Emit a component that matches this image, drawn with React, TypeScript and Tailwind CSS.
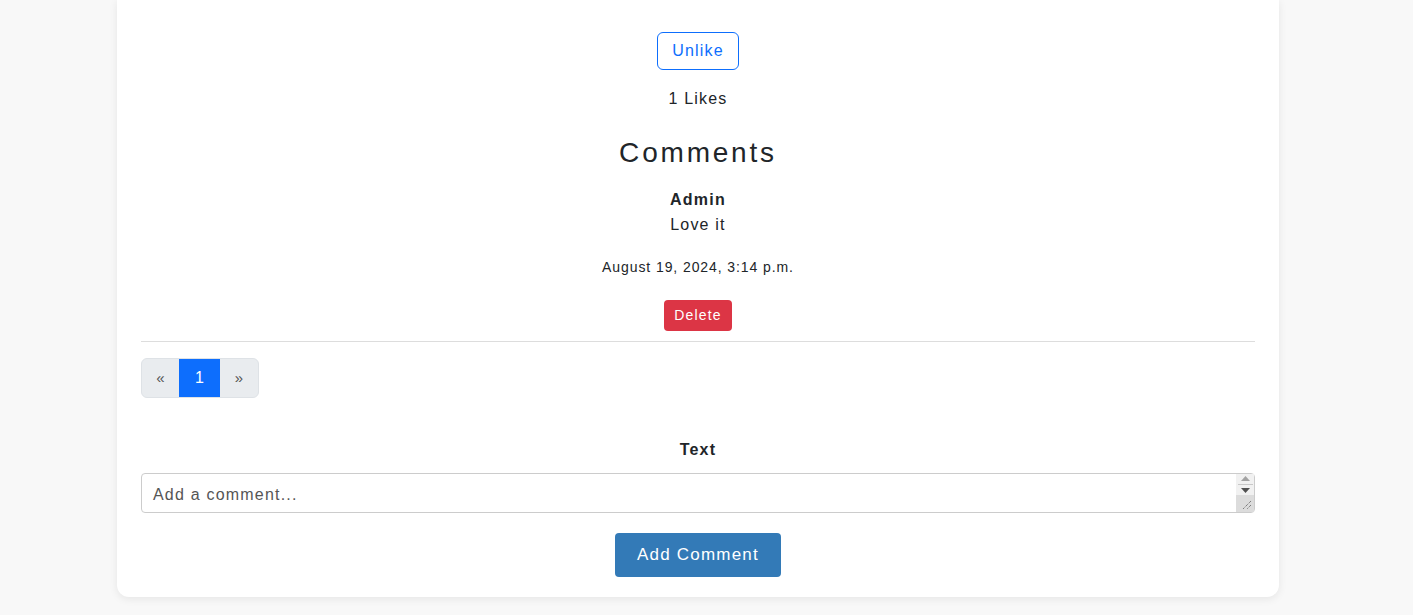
export default function App() {
  return (
    <div
      className="min-h-[615px] bg-[#f8f8f8] pl-[117px] pr-[134px] text-[#212529] tracking-[0.075em]"
      style={{ fontFamily: '"Liberation Sans", Arial, sans-serif' }}
    >
      <div className="bg-white rounded-b-xl shadow-[0_2px_8px_rgba(0,0,0,0.08)] px-6 pt-8 pb-5">
        {/* Likes */}
        <div className="flex flex-col items-center">
          <button className="w-[82px] h-[38px] border border-[#0d6efd] rounded-md text-[#0d6efd] text-base">
            Unlike
          </button>
          <p className="mt-[17px] leading-6 text-base">1 Likes</p>
        </div>

        {/* Comments */}
        <h3 className="mt-[25px] text-center text-[28px] leading-[34px] tracking-[0.1em]">Comments</h3>
        <div className="mt-[17px] flex flex-col items-center">
          <p className="font-bold leading-[26px]">Admin</p>
          <p className="leading-6">Love it</p>
          <p className="mt-[20px] text-[14px] leading-5 tracking-[0.065em]">August 19, 2024, 3:14 p.m.</p>
          <button className="mt-[23px] w-[68px] h-[31px] rounded bg-[#dc3545] text-white text-[14px]">
            Delete
          </button>
        </div>
        <hr className="mt-[10px] border-t border-[#dddddd]" />

        {/* Pagination */}
        <div className="mt-4 flex">
          <div className="flex h-10 rounded-md border border-[#dee2e6] overflow-hidden bg-[#e9ecef] text-[#555] text-[15px] tracking-normal">
            <span className="w-[37px] flex items-center justify-center">&laquo;</span>
            <span className="w-[41px] flex items-center justify-center bg-[#0d6efd] text-white text-base">1</span>
            <span className="w-[38px] flex items-center justify-center">&raquo;</span>
          </div>
        </div>

        {/* Form */}
        <label className="block mt-10 text-center font-bold leading-6">Text</label>
        <div className="relative mt-[11px]">
          <textarea
            rows={1}
            placeholder="Add a comment..."
            className="block w-full h-10 border border-[#cccccc] rounded pl-[11px] pr-6 pt-[11px] pb-[7px] text-[16px] leading-5 tracking-[0.075em] placeholder:text-[#555] resize-none"
          />
          {/* scrollbar */}
          <div className="absolute right-px top-px bottom-px w-[18px] flex flex-col rounded-r pointer-events-none">
            <div className="h-[21px] bg-[#f1f1f1] flex flex-col items-center justify-center gap-[3px]">
              <svg width="9" height="5" viewBox="0 0 9 5">
                <path d="M0 5 L4.5 0 L9 5 Z" fill="#a3a3a3" />
              </svg>
              <div className="w-[15px] h-px bg-[#c8c8c8]" />
              <svg width="9" height="5" viewBox="0 0 9 5">
                <path d="M0 0 L4.5 5 L9 0 Z" fill="#505050" />
              </svg>
            </div>
            <div className="flex-1 bg-[#dcdcdc] flex items-end justify-end pr-[2px] pb-[2px]">
              <svg width="10" height="10" viewBox="0 0 10 10">
                <path d="M9 1 L1 9 M9 5 L5 9" stroke="#555" strokeWidth="1" strokeDasharray="1 1" />
              </svg>
            </div>
          </div>
        </div>
        <div className="mt-5 flex justify-center">
          <button className="w-[166px] h-[44px] rounded bg-[#337ab7] text-white text-[17px]">
            Add Comment
          </button>
        </div>
      </div>
    </div>
  );
}
